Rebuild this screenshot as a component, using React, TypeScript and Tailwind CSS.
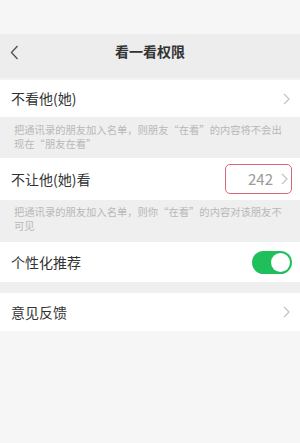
import React from "react";

const Chevron = ({ className = "" }: { className?: string }) => (
  <svg width="7" height="12" viewBox="0 0 7 12" className={className}>
    <path d="M1 1 L6 6 L1 11" fill="none" stroke="#c4c4c4" strokeWidth="1.3" />
  </svg>
);

export default function App() {
  const font = { fontFamily: '"Noto Sans CJK SC", "Noto Sans", sans-serif' };
  return (
    <div className="w-[300px] h-[443px] bg-[#f6f6f6] overflow-hidden" style={font}>
      <div className="h-[34px] bg-[#f6f6f6]" />
      <div className="h-[44px] bg-[#ededed] flex items-center relative pb-[8px]">
        <svg width="9" height="15" viewBox="0 0 9 15" className="ml-[10px]">
          <path d="M7.5 1 L1.5 7.5 L7.5 14" fill="none" stroke="#555" strokeWidth="1.4" />
        </svg>
        <div className="absolute left-0 right-0 top-[7px] text-center text-[14px] leading-[20px] font-bold text-[#333] pointer-events-none">看一看权限</div>
      </div>
      <div className="h-[2px] bg-[#f3f3f3]" />
      <div className="h-[37px] bg-white flex items-center justify-between pl-[11px] pr-[10px]">
        <span className="text-[14px] text-[#333]">不看他(她)</span>
        <Chevron />
      </div>
      <div className="h-[41px] bg-[#efefef] px-[14px] pt-[6px] text-[10.3px] leading-[14px] text-[#b8b8b8] whitespace-nowrap">
        <div>把通讯录的朋友加入名单，则朋友“在看”的内容将不会出</div>
        <div>现在“朋友在看”</div>
      </div>
      <div className="h-[42px] bg-white flex items-center justify-between pl-[11px] pr-[8px]">
        <span className="text-[14px] text-[#333]">不让他(她)看</span>
        <div className="w-[67px] h-[30px] border-[1.5px] border-[#d9677a] rounded-[5px] flex items-center justify-end pr-[3px]">
          <span className="text-[15px] text-[#9a9a9a] mr-[8px]">242</span>
          <Chevron />
        </div>
      </div>
      <div className="h-[42px] bg-[#efefef] px-[14px] pt-[5px] text-[10.3px] leading-[14px] text-[#b8b8b8] whitespace-nowrap">
        <div>把通讯录的朋友加入名单，则你“在看”的内容对该朋友不</div>
        <div>可见</div>
      </div>
      <div className="h-[40px] bg-white flex items-center justify-between pl-[11px] pr-[8px]">
        <span className="text-[14px] text-[#333]">个性化推荐</span>
        <div className="w-[40px] h-[23px] rounded-full bg-[#1fbf5c] flex items-center justify-end pr-[2px]">
          <div className="w-[19px] h-[19px] rounded-full bg-white" />
        </div>
      </div>
      <div className="h-[11px] bg-[#efefef]" />
      <div className="h-[38px] bg-white flex items-center justify-between pl-[11px] pr-[10px]">
        <span className="text-[14px] text-[#333]">意见反馈</span>
        <Chevron />
      </div>
    </div>
  );
}
